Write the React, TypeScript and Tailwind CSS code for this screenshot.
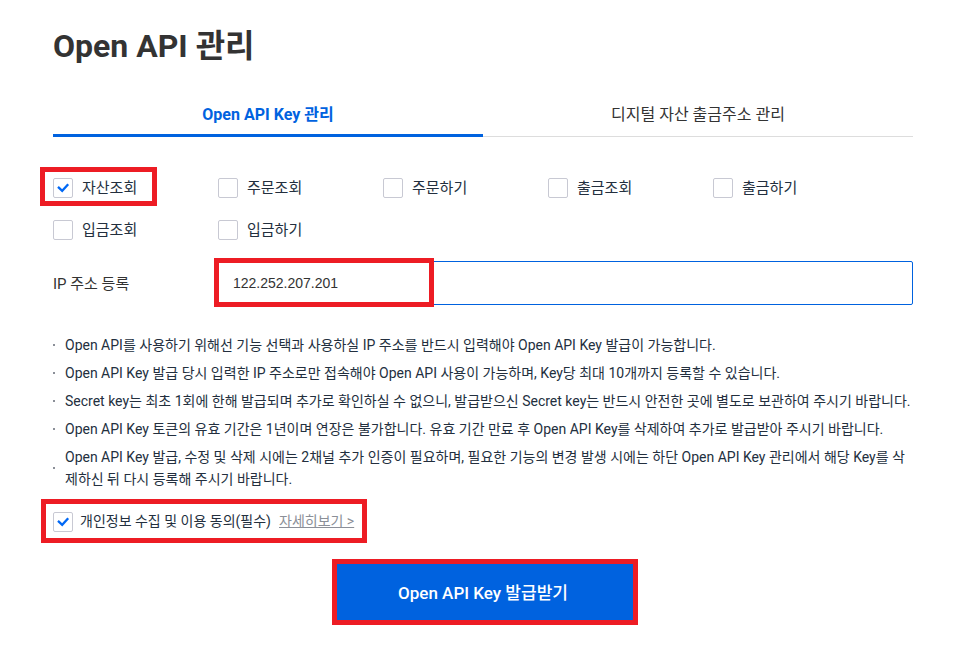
import { useState } from "react";
import type { ReactNode } from "react";

const permissions = [
  "자산조회",
  "주문조회",
  "주문하기",
  "출금조회",
  "출금하기",
  "입금조회",
  "입금하기",
];

const notices = [
  "Open API를 사용하기 위해선 기능 선택과 사용하실 IP 주소를 반드시 입력해야 Open API Key 발급이 가능합니다.",
  "Open API Key 발급 당시 입력한 IP 주소로만 접속해야 Open API 사용이 가능하며, Key당 최대 10개까지 등록할 수 있습니다.",
  "Secret key는 최초 1회에 한해 발급되며 추가로 확인하실 수 없으니, 발급받으신 Secret key는 반드시 안전한 곳에 별도로 보관하여 주시기 바랍니다.",
  "Open API Key 토큰의 유효 기간은 1년이며 연장은 불가합니다. 유효 기간 만료 후 Open API Key를 삭제하여 추가로 발급받아 주시기 바랍니다.",
  "Open API Key 발급, 수정 및 삭제 시에는 2채널 추가 인증이 필요하며, 필요한 기능의 변경 발생 시에는 하단 Open API Key 관리에서 해당 Key를 삭제하신 뒤 다시 등록해 주시기 바랍니다.",
];

function Highlight({ className }: { className: string }) {
  return (
    <span
      aria-hidden="true"
      className={`pointer-events-none absolute border-5 border-[#ed1c24] ${className}`}
    />
  );
}

function Checkbox({
  id,
  initial = false,
  className,
  children,
}: {
  id: string;
  initial?: boolean;
  className: string;
  children: ReactNode;
}) {
  const [checked, setChecked] = useState(initial);
  return (
    <div className="flex items-center">
      <span className="grid size-5 shrink-0">
        <input
          id={id}
          type="checkbox"
          checked={checked}
          onChange={(e) => setChecked(e.target.checked)}
          className="col-start-1 row-start-1 size-5 appearance-none rounded-xs border border-[#c8c9d3] bg-white"
        />
        {checked && (
          <svg
            viewBox="0 0 20 20"
            className="pointer-events-none col-start-1 row-start-1 size-5"
            fill="none"
            stroke="#0068f5"
            strokeWidth="2.3"
          >
            <path d="M5 8.8 L9.2 12.8 L15.2 6.3" />
          </svg>
        )}
      </span>
      <label htmlFor={id} className={className}>
        {children}
      </label>
    </div>
  );
}

export default function App() {
  const [ip, setIp] = useState("122.252.207.201");

  return (
    <main className="bg-white pt-6 pr-16 pb-8 pl-[53px] font-[Roboto,'Noto_Sans_CJK_KR',sans-serif] text-[#232f3e]">
      <h1 className="text-[32px] leading-11 font-bold text-[#333333]">Open API 관리</h1>

      <div role="tablist" className="mt-6 grid h-[45px] grid-cols-2">
        <button
          role="tab"
          aria-selected="true"
          className="border-b-3 border-[#0062df] pt-1 text-base font-bold text-[#0062df]"
        >
          Open API Key 관리
        </button>
        <button
          role="tab"
          aria-selected="false"
          className="border-b border-[#dddddd] pt-0.5 text-base text-[#333333]"
        >
          디지털 자산 출금주소 관리
        </button>
      </div>

      <form onSubmit={(e) => e.preventDefault()}>
        <div className="mt-10 grid grid-cols-[repeat(5,165px)] gap-y-5">
          {permissions.map((name, i) => (
            <div key={name} className="relative">
              <Checkbox
                id={`permission-${i}`}
                initial={i === 0}
                className="pl-[9px] text-[15px] leading-[22px]"
              >
                {name}
              </Checkbox>
              {i === 0 && <Highlight className="-top-2.5 -left-[13px] h-[39px] w-[117px]" />}
            </div>
          ))}
        </div>

        <div className="mt-5 flex items-center">
          <label htmlFor="ip" className="w-[165px] shrink-0 pt-0.5 text-[15px] text-[#333333]">
            IP 주소 등록
          </label>
          <div className="relative flex-1">
            <input
              id="ip"
              value={ip}
              onChange={(e) => setIp(e.target.value)}
              className="block h-11 w-full rounded-xs border border-[#0062df] px-3.5 font-['Liberation_Sans',sans-serif] text-sm text-[#333333] outline-none"
            />
            <Highlight className="-top-[3px] -left-1 h-[49px] w-[220px]" />
          </div>
        </div>

        <ul className="mt-[29px] -mr-1 grid gap-1.5 text-sm leading-[22px]">
          {notices.map((text) => (
            <li key={text} className="flex items-center">
              <span aria-hidden="true" className="mr-2.5 size-0.5 shrink-0 bg-[#8b8f98]" />
              <span className="break-all">{text}</span>
            </li>
          ))}
        </ul>

        <div className="relative mt-[21px] flex items-center">
          <Checkbox id="consent" initial className="pb-0.5 pl-[7px] text-sm leading-5">
            개인정보 수집 및 이용 동의(필수)
          </Checkbox>
          <a href="#details" className="ml-2 pb-0.5 text-sm leading-5 text-[#8b8f98] underline">
            자세히보기 &gt;
          </a>
          <Highlight className="-top-3 -left-3 h-11 w-[326px]" />
        </div>

        <div className="mt-[31px] flex justify-center">
          <div className="relative w-[300px]">
            <button
              type="submit"
              className="h-14 w-full bg-[#0062df] pt-1 text-[17px] font-medium text-white"
            >
              Open API Key 발급받기
            </button>
            <Highlight className="-top-[5px] -left-px h-[66px] w-[306px]" />
          </div>
        </div>
      </form>
    </main>
  );
}
